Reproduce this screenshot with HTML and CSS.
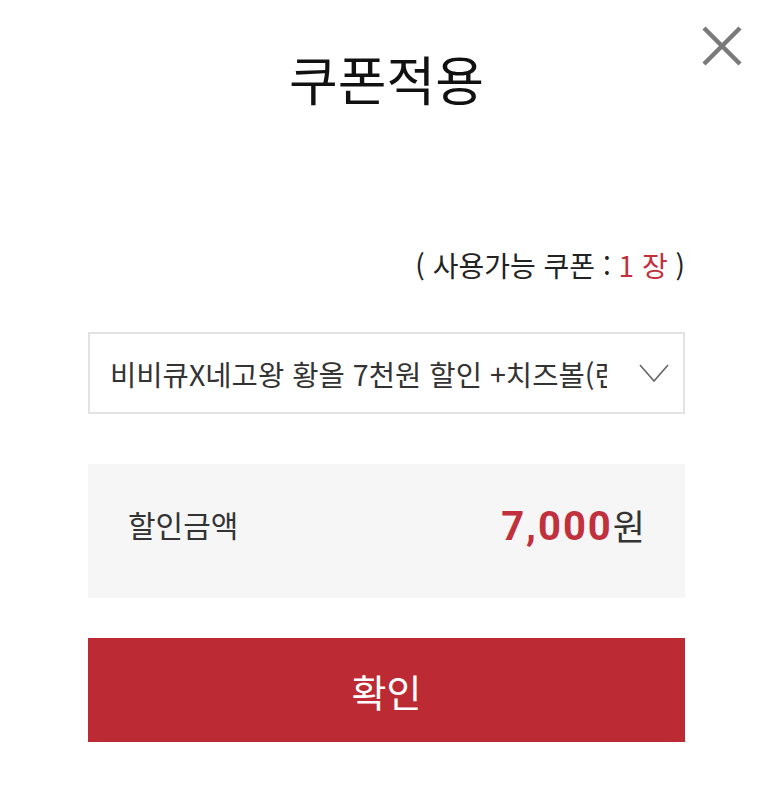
FILE: index.html
```html
<!DOCTYPE html>
<html lang="ko">
<head>
<meta charset="utf-8">
<link rel="stylesheet" href="styles.css">
</head>
<body>
<div class="modal">
  <button class="close" aria-label="닫기">
    <svg width="40" height="40" viewBox="0 0 40 40"><path d="M2 2 L38 38 M38 2 L2 38" stroke="#7a7a7a" stroke-width="4.5" fill="none"/></svg>
  </button>
  <h1 class="title">쿠폰적용</h1>
  <p class="count">( 사용가능 쿠폰 : <span class="red">1 장</span> )</p>
  <div class="select">
    <span class="select-text">비비큐X네고왕 황올 7천원 할인 +치즈볼(랜덤)</span>
    <svg class="chev" width="30" height="19" viewBox="0 0 30 19"><path d="M1 1 L15 17 L29 1" stroke="#666" stroke-width="1.6" fill="none"/></svg>
  </div>
  <div class="amount">
    <span class="amount-label">할인금액</span>
    <span class="amount-value"><b>7,000</b>원</span>
  </div>
  <button class="confirm">확인</button>
</div>
</body>
</html>
```
FILE: styles.css
```css
html, body { margin: 0; padding: 0; background: #fff; }
body { font-family: "Noto Sans CJK KR", "Noto Sans", sans-serif; color: #222; }
.modal { position: relative; width: 597px; margin: 0 auto; padding-top: 44px; display: flex; flex-direction: column; }
.close { position: absolute; top: 26px; right: -57px; width: 40px; height: 40px; padding: 0; border: 0; background: none; }
.close svg { display: block; }
.title { margin: 0; font-size: 53px; font-weight: 400; line-height: 68px; text-align: center; color: #111; }
.count { margin: 136px 0 0; font-size: 28px; line-height: 34px; text-align: right; color: #222; }
.red { color: #c0313d; }
.select { margin-top: 50px; height: 82px; box-sizing: border-box; border: 2px solid #e2e2e2; display: flex; align-items: center; padding-left: 20px; padding-right: 14px; }
.select-text { width: 497px; overflow: hidden; white-space: nowrap; font-size: 28.6px; color: #333; }
.chev { margin-left: auto; }
.amount { margin-top: 50px; height: 134px; background: #f6f6f6; display: flex; align-items: center; justify-content: space-between; padding: 0 40px 14px 40px; box-sizing: border-box; }
.amount-label { font-size: 30px; color: #333; }
.amount-value { font-size: 35px; color: #333; }
.amount-value b { font-family: Roboto, "Noto Sans", sans-serif; font-weight: 700; color: #c0313d; font-size: 40px; letter-spacing: 2px; }
.confirm { margin-top: 40px; height: 104px; border: 0; background: #bc2b33; color: #fff; font-family: "Noto Sans CJK KR", sans-serif; font-size: 38px; padding: 0; }
```
